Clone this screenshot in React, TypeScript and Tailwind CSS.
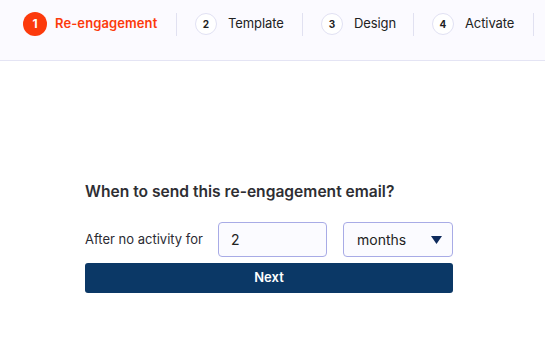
const steps = [
    { n: 1, label: "Re-engagement", active: true, w: "w-[103px]" },
    { n: 2, label: "Template", w: "w-[56px]" },
    { n: 3, label: "Design", w: "w-[41px]" },
    { n: 4, label: "Activate", w: "w-[50px]" },
];

export default function App() {
    return (
        <div className="w-[545px] h-[352px] bg-white font-['Inter',sans-serif] text-[#2b2b33] overflow-hidden">
            {/* ── Stepper ───────────────────────────── */}
            <header className="h-[61px] bg-[#fbfaff] border-b border-[#e4e4f4] flex items-start pt-[12px] pl-[23px] whitespace-nowrap">
                {steps.map((s) => (
                    <div key={s.n} className="flex items-center h-[24px] shrink-0">
                        {s.active ? (
                            <span className="w-6 h-6 rounded-full bg-[#fc3a0c] text-white text-[12px] font-bold flex items-center justify-center">
                                {s.n}
                            </span>
                        ) : (
                            <span className="w-[22px] h-[22px] rounded-full bg-white border border-[#e1e1f3] text-[10px] font-bold text-[#222] flex items-center justify-center">
                                {s.n}
                            </span>
                        )}
                        <span
                            className={
                                (s.active
                                    ? "ml-2 text-[13px] font-semibold text-[#fc3a0c] tracking-[0.1px] "
                                    : "ml-[11px] text-[13px] text-[#222] tracking-[-0.1px] ") + s.w
                            }
                        >
                            {s.label}
                        </span>
                        <div className="w-px h-[23px] bg-[#e1e1f1] mx-[18px]" />
                    </div>
                ))}
            </header>

            {/* ── Form ──────────────────────────────── */}
            <main className="ml-[85px] w-[368px] pt-[121px]">
                <h2 className="text-[15.6px] font-semibold text-[#2e2e33] leading-[20px]">
                    When to send this re-engagement email?
                </h2>
                <div className="mt-[20px] flex items-center">
                    <span className="text-[13px] text-[#2b2b33] w-[133px]">After no activity for</span>
                    <div className="w-[109px] h-[35px] rounded-[4px] border border-[#a8abe6] bg-[#fbfbff] flex items-center px-3 text-[14px] text-[#222]">
                        2
                    </div>
                    <div className="ml-4 w-[110px] h-[35px] rounded-[4px] border border-[#a8abe6] bg-[#fbfbff] flex items-center justify-between pl-[13px] pr-[10px] text-[14px] text-[#222]">
                        <span>months</span>
                        <svg width="11" height="8" viewBox="0 0 11 8">
                            <path d="M0 0h11L5.5 8z" fill="#0e2a5c" />
                        </svg>
                    </div>
                </div>
                <button className="mt-[6px] w-[368px] h-[30px] rounded-[3px] bg-[#0b3866] text-white text-[13px] font-semibold">
                    Next
                </button>
            </main>
        </div>
    );
}
